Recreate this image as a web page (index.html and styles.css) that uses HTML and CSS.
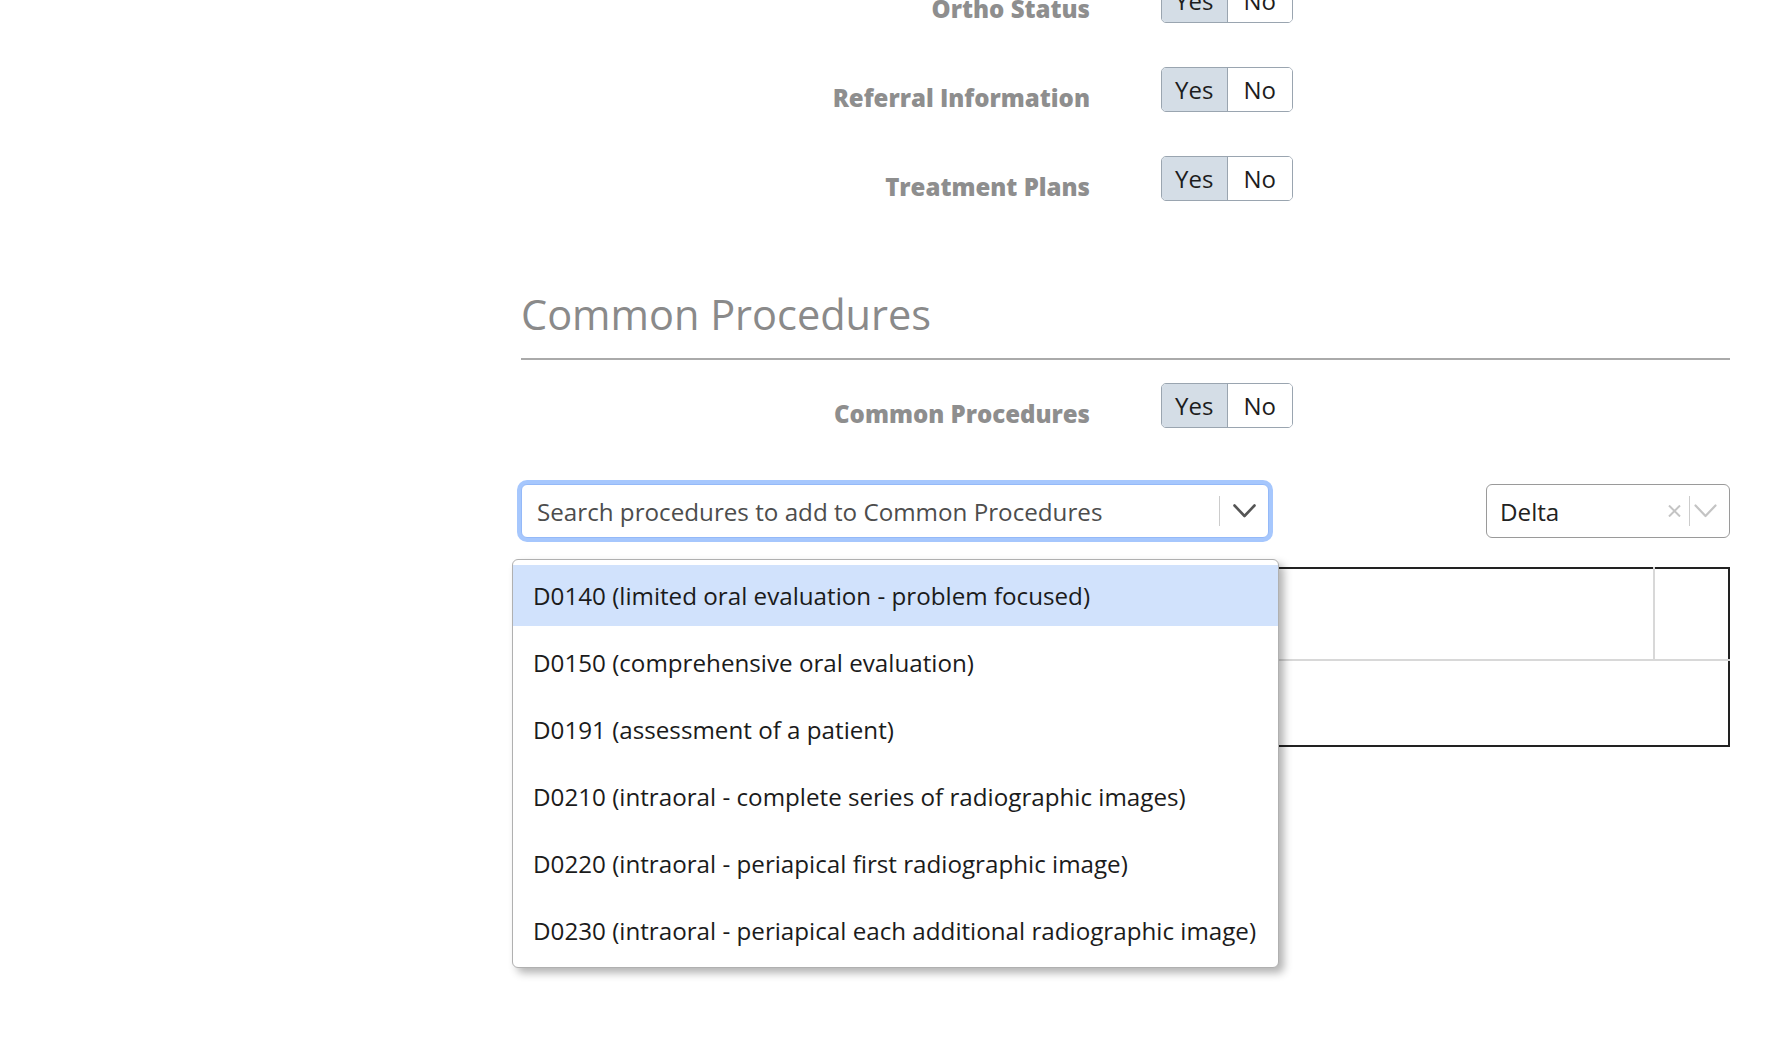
FILE: index.html
```html
<!DOCTYPE html>
<html lang="en">
<head>
<meta charset="utf-8">
<title>Common Procedures</title>
<link rel="stylesheet" href="styles.css">
</head>
<body>
<div class="page">
  <div class="rows rows-top">
    <div class="label">Ortho Status</div>
    <div class="toggle"><span class="seg on">Yes</span><span class="seg">No</span></div>
    <div class="label">Referral Information</div>
    <div class="toggle"><span class="seg on">Yes</span><span class="seg">No</span></div>
    <div class="label">Treatment Plans</div>
    <div class="toggle"><span class="seg on">Yes</span><span class="seg">No</span></div>
  </div>

  <h2 class="section-title">Common Procedures</h2>

  <div class="rows rows-cp">
    <div class="label">Common Procedures</div>
    <div class="toggle"><span class="seg on">Yes</span><span class="seg">No</span></div>
  </div>

  <div class="select-row">
    <div class="search-wrap">
      <div class="select search">
        <span class="value placeholder">Search procedures to add to Common Procedures</span>
        <span class="sep"></span>
        <span class="chev">
          <svg width="23" height="14" viewBox="0 0 23 14"><path d="M1.5 1.5 L11.5 12 L21.5 1.5" fill="none" stroke="#555" stroke-width="2.6" stroke-linecap="round" stroke-linejoin="round"/></svg>
        </span>
      </div>
      <ul class="menu">
        <li class="item active">D0140 (limited oral evaluation - problem focused)</li>
        <li class="item">D0150 (comprehensive oral evaluation)</li>
        <li class="item">D0191 (assessment of a patient)</li>
        <li class="item">D0210 (intraoral - complete series of radiographic images)</li>
        <li class="item">D0220 (intraoral - periapical first radiographic image)</li>
        <li class="item">D0230 (intraoral - periapical each additional radiographic image)</li>
      </ul>
    </div>
    <div class="select delta">
      <span class="value">Delta</span>
      <span class="clear">
        <svg width="13" height="12" viewBox="0 0 13 12"><path d="M1 0.5 L12 11.5 M12 0.5 L1 11.5" fill="none" stroke="#c4c4c4" stroke-width="2"/></svg>
      </span>
      <span class="sep"></span>
      <span class="chev small">
        <svg width="23" height="14" viewBox="0 0 23 14"><path d="M1.5 1.5 L11.5 12 L21.5 1.5" fill="none" stroke="#c4c4c4" stroke-width="2.2" stroke-linecap="round" stroke-linejoin="round"/></svg>
      </span>
    </div>
  </div>

  <table class="grid">
    <tr class="r1"><td class="c-main"></td><td class="c-side"></td></tr>
    <tr class="r2"><td colspan="2"></td></tr>
  </table>
</div>
</body>
</html>
```

FILE: styles.css
```css
html, body {
  margin: 0;
  padding: 0;
  background: #ffffff;
}
body {
  font-family: "Open Sans", "Noto Sans", sans-serif;
  overflow: hidden;
  height: 1054px;
}
.page {
  padding: 0 60px 0 521px;
  margin-top: -22px;
}
.rows {
  display: grid;
  grid-template-columns: 569px 132px;
  grid-auto-rows: 45px;
  column-gap: 71px;
  row-gap: 44px;
}
.label {
  text-align: right;
  font-weight: 800;
  font-size: 24px;
  line-height: 36px;
  padding-top: 13px;
  color: #8e8e8e;
  white-space: nowrap;
}
.toggle {
  display: flex;
  height: 45px;
  box-sizing: border-box;
  border: 1px solid #9aa5b0;
  border-radius: 5px;
  overflow: hidden;
}
.seg {
  flex: 1;
  display: flex;
  align-items: center;
  justify-content: center;
  font-size: 24px;
  color: #1d1d1d;
  background: #ffffff;
}
.seg.on {
  background: #d4dde6;
  border-right: 1px solid #9aa5b0;
}
.section-title {
  margin: 88px 0 0 0;
  font-weight: 400;
  font-size: 41.5px;
  line-height: 50px;
  color: #8a8a8a;
  padding-bottom: 19px;
  border-bottom: 2px solid #aaaaaa;
}
.rows-cp {
  margin-top: 23px;
}
.select-row {
  display: flex;
  justify-content: space-between;
  align-items: center;
  margin-top: 56px;
}
.search-wrap {
  position: relative;
  width: 748px;
}
.select {
  display: flex;
  align-items: center;
  height: 54px;
  box-sizing: border-box;
  border-radius: 6px;
  background: #fff;
}
.search {
  border: 1px solid #94b9f8;
  box-shadow: 0 0 0 4px #a6c7fd;
  padding-left: 15px;
}
.value {
  flex: 1;
  font-size: 24.2px;
  color: #222;
  white-space: nowrap;
}
.value.placeholder {
  color: #4d4d4d;
}
.sep {
  width: 1px;
  height: 30px;
  background: #cccccc;
}
.chev {
  display: flex;
  width: 48px;
  justify-content: center;
  align-items: center;
}
.delta {
  width: 244px;
  border: 1px solid #9a9a9a;
  padding-left: 13px;
}
.clear {
  display: flex;
  align-items: center;
  margin-right: 8px;
}
.chev.small {
  width: auto;
  padding: 0 12px 0 4px;
}
.menu {
  position: absolute;
  left: -9px;
  top: 75px;
  width: 767px;
  box-sizing: border-box;
  margin: 0;
  padding: 5px 0 0 0;
  list-style: none;
  background: #fff;
  border: 1px solid #b0b0b0;
  border-radius: 6px;
  box-shadow: 5px 5px 8px rgba(0, 0, 0, 0.3);
  z-index: 2;
}
.item {
  height: 61px;
  margin-bottom: 6px;
  display: flex;
  align-items: center;
  padding-left: 20px;
  font-size: 24.2px;
  color: #1b1b1b;
  white-space: nowrap;
}
.item.active {
  background: #d1e2fc;
}
.grid {
  margin-top: 29px;
  width: 100%;
  border-collapse: collapse;
  border: 2px solid #222;
}
.grid td {
  padding: 0;
}
.r1 td {
  height: 90px;
  border-bottom: 2px solid #d8d8d8;
}
.r1 .c-side {
  width: 73px;
  border-left: 2px solid #d8d8d8;
}
.r2 td {
  height: 84px;
}
```
